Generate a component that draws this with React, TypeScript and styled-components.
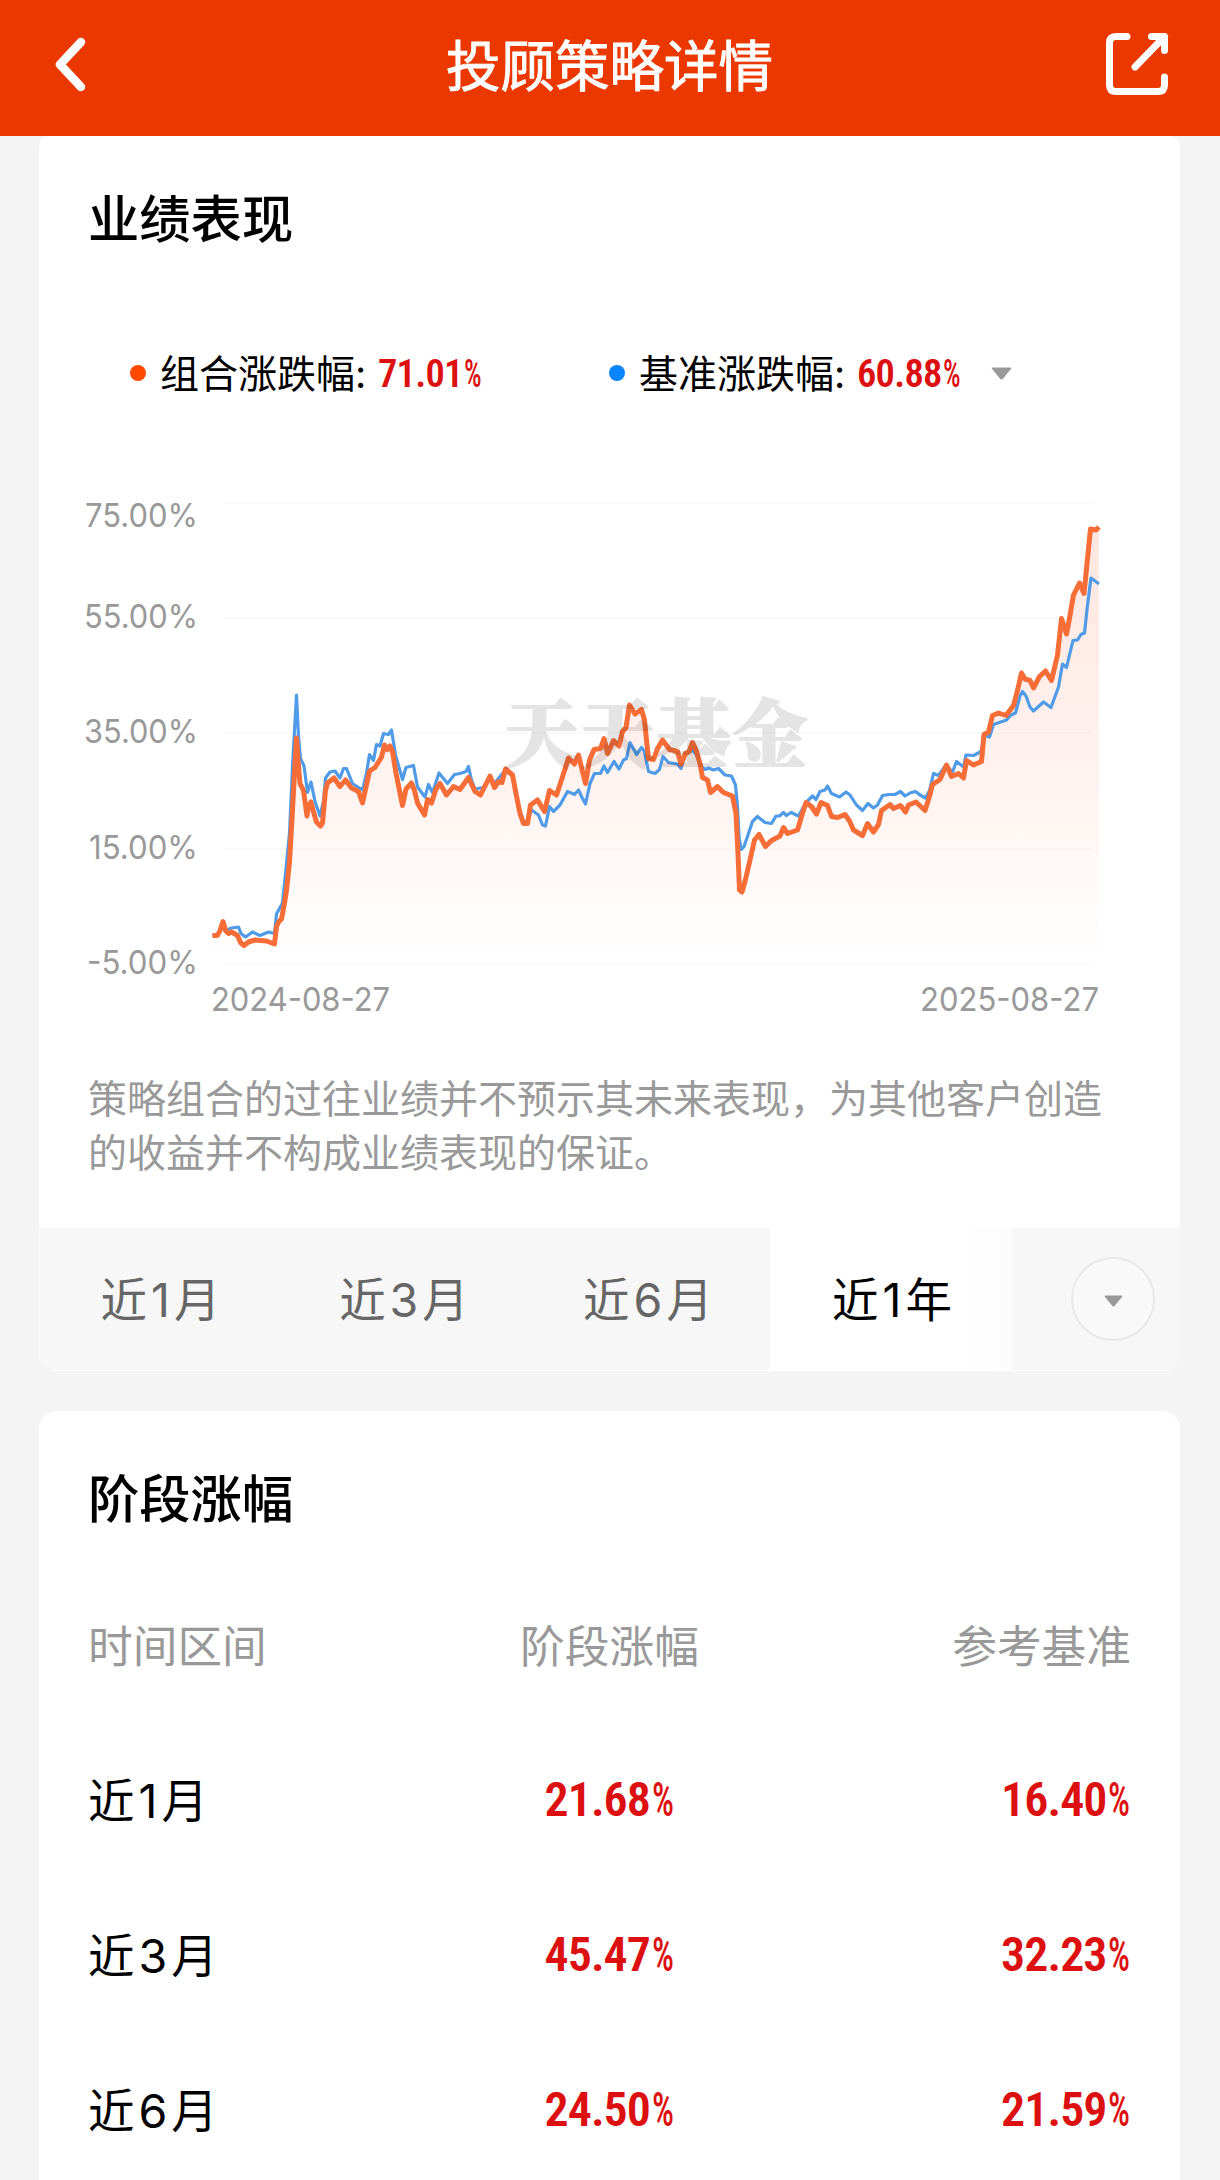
import React from 'react';
import styled, { createGlobalStyle } from 'styled-components';

const GlobalStyle = createGlobalStyle`
  * { box-sizing: border-box; }
  body {
    margin: 0;
    background: #f4f4f4;
    color: #000;
    font-family: Inter, "Noto Sans CJK SC", sans-serif;
  }
`;

const Page = styled.div`
  width: 1220px;
  height: 2180px;
  overflow: hidden;
  background: #f4f4f4;
`;

const Header = styled.header`
  display: flex;
  align-items: center;
  justify-content: space-between;
  height: 136px;
  padding: 0 51px 7px 55px;
  background: #ea3800;
`;

const PageTitle = styled.h1`
  margin: 2px 0 0 27px;
  font-size: 54.5px;
  font-weight: 400;
  line-height: 80px;
  color: #fff;
  -webkit-text-stroke: 0.9px #fff;
`;

const Main = styled.main`
  display: flex;
  flex-direction: column;
  gap: 40px;
  padding: 0 40px 0 39px;
`;

const Card = styled.section<{ $flushTop?: boolean; $height?: number }>`
  height: ${(p) => (p.$height ? `${p.$height}px` : 'auto')};
  border-radius: ${(p) => (p.$flushTop ? '10px 10px 16px 16px' : '18px')};
  background: #fff;
  overflow: hidden;
`;

const CardTitle = styled.h2<{ $height: number }>`
  margin: 0;
  padding-left: 49px;
  height: ${(p) => p.$height}px;
  line-height: ${(p) => p.$height}px;
  font-size: 51.3px;
  font-weight: 500;
`;

const Legend = styled.div`
  display: flex;
  align-items: center;
  height: 142px;
  padding-left: 91px;
`;

const LegendItem = styled.div<{ $width: number }>`
  display: flex;
  align-items: center;
  width: ${(p) => p.$width}px;
  font-size: 39px;
  white-space: nowrap;
`;

const Dot = styled.span<{ $color: string }>`
  flex: none;
  width: 16px;
  height: 16px;
  margin-right: 14px;
  border-radius: 50%;
  background: ${(p) => p.$color};
`;

const LegendLabel = styled.span`
  width: 218px;
  padding-bottom: 4px;
  font-weight: 400;
`;

const Rate = styled.span<{ $size: number }>`
  display: inline-flex;
  font-family: "Roboto Condensed", Roboto, sans-serif;
  font-stretch: 75%;
  font-size: ${(p) => p.$size}px;
  font-weight: 600;
  letter-spacing: -0.02em;
  color: #dc1010;
`;

const Percent = styled.span`
  width: 0.47em;
  margin-left: 0.04em;
  font-weight: 500;
  letter-spacing: 0;
  transform: scaleX(0.72);
  transform-origin: left center;
`;

const Chart = styled.svg`
  display: block;
  width: 1141px;
  height: 596px;
`;

const Disclaimer = styled.p`
  margin: 0;
  padding: 32px 40px 0 49px;
  height: 188px;
  font-size: 39px;
  font-weight: 400;
  line-height: 54px;
  color: #999;
  white-space: nowrap;
`;

const Tabs = styled.div`
  display: flex;
  height: 143px;
  background: #f7f7f7;
  border-bottom: 1px solid #fff;
`;

const Tab = styled.div<{ $width: number; $active?: boolean }>`
  display: flex;
  align-items: center;
  justify-content: center;
  width: ${(p) => p.$width}px;
  padding: 0 0 5px 4px;
  font-size: 46.5px;
  font-weight: 400;
  letter-spacing: 4px;
  color: ${(p) => (p.$active ? '#000' : '#666')};
  background: ${(p) =>
    p.$active ? 'linear-gradient(90deg, #fff 78%, #fcfcfc 98%, #f7f7f7 100%)' : 'transparent'};
`;

const More = styled.div`
  display: flex;
  flex: 1;
  align-items: center;
  justify-content: flex-end;
  padding-right: 25px;
`;

const MoreButton = styled.button`
  display: flex;
  align-items: center;
  justify-content: center;
  width: 84px;
  height: 84px;
  padding: 3px 0 0;
  border: 2px solid #e8e8e8;
  border-radius: 50%;
  background: #f9f9f9;
`;

const TableRow = styled.div<{ $height: number }>`
  display: grid;
  grid-template-columns: 1fr 1fr 1fr;
  align-items: center;
  height: ${(p) => p.$height}px;
  padding: 0 49px;
`;

const TableHead = styled(TableRow)`
  margin-bottom: 17px;
  padding-bottom: 5px;
  font-size: 44.7px;
  color: #999;
`;

const Cell = styled.div<{ $align?: string }>`
  display: flex;
  justify-content: ${(p) => p.$align || 'flex-start'};
`;

const PeriodCell = styled(Cell)`
  padding-bottom: 5px;
  font-size: 46.5px;
  letter-spacing: 4px;
`;

const productLine =
  '212.5,935.5 217.5,935.5 220,930.5 223,921.5 225.5,930.5 228.5,933.5 231.5,932 237.5,935.5 240.5,942.5 244,945.5 248.5,942 255,940 266.5,941 274.5,944 276.5,926.5 279,921.5 281.5,919 284.5,903 286.5,890.5 289.5,862 292,819 294.5,773 296.5,738 298.5,766 300,783.5 303.5,790.5 307,816 308.5,806 311,802 313.5,812 316.5,822 320.5,826 322.5,823 325.5,790.5 327.5,783 334,778 340,786.5 345.5,780 351.5,788 358.5,791.5 362.5,803 366,787 369.5,771 375,767.5 378.5,762 381.5,757 384.5,745 387.5,749.5 390,746 392.5,751.5 396,773 399.5,790.5 402.5,805.5 406,789 411.5,783 414.5,790.5 417.5,803 424.5,815 427.5,799.5 431.5,803 436,789 440,783.5 446.5,795 453.5,786.5 460,789.5 468.5,777.5 475,791.5 480.5,795 490,776 494.5,787.5 498.5,781.5 502,782.5 505.5,769 512.5,775 516,793.5 520,813.5 523.5,823.5 527.5,823.5 530.5,805 537.5,800 544.5,811.5 549.5,790.5 556.5,795 561.5,780 568.5,758 574.5,764 578.5,755 582.5,771.5 585.5,783.5 589.5,760 594,749.5 600.5,748.5 604,738.5 607.5,753.5 613.5,740.5 619,746 622.5,731.5 626,727.5 629.5,705 635,714 641.5,709.5 644.5,720 646.5,740 648.5,758.5 653.5,759.5 657.5,748.5 662.5,740 669.5,749.5 677.5,751.5 681,764 685.5,753.5 689,751.5 692.5,742.5 696,750 700,763.5 702.5,777.5 707.5,780 710.5,792.5 717.5,786.5 723.5,792.5 732.5,796 736,813.5 738,853.5 739.5,890 742,892 745,881.5 750,860 754.5,840 759,834.5 765.5,846.5 771.5,840.5 780,836 783.5,827.5 787.5,833.5 797.5,830 801.5,816.5 806,802.5 811.5,806.5 816.5,814 821,802.5 827.5,805.5 831.5,816.5 837.5,817.5 845,814.5 849.5,821 853.5,830 862.5,835.5 867.5,823.5 873.5,832 878.5,824.5 881.5,810.5 890,804.5 893.5,808.5 900.5,805.5 905.5,812 908.5,805 916,802 925,810.5 929,798 932.5,784.5 940,779.5 946.5,765 951.5,776.5 958.5,773.5 963.5,778 966.5,760.5 973.5,765 981.5,761.5 984,734.5 988.5,732 992.5,715.5 998.5,713 1006,715.5 1013.5,705.5 1017.5,690.5 1021.5,673 1025,679 1030,680.5 1033.5,688 1039.5,676.5 1045.5,671 1051.5,680.5 1057.5,655 1061.5,618.5 1066.5,634 1070,615.5 1073.5,595 1079.5,583 1084,593.5 1087.5,558.5 1090.5,529 1096,530 1099,527';

const benchmarkLine =
  '212.5,935.5 218,934 223,924 226.5,930 231.5,928 238.5,927 241,933.5 245.5,937 252.5,932 260,935.5 268.5,932 274.5,933.5 276.5,914 282.5,903 286,869 289.5,833.5 292.5,766 296.5,695 298.5,737 300.5,758.5 304,766 307.5,792.5 311,782 315,801.5 320,816 323.5,801.5 325.5,778 330,772 335,771 340,778 343.5,768.5 346.5,768.5 352.5,783.5 362.5,790 366.5,773 369.5,754.5 373.5,760.5 376.5,744.5 380,746 383.5,733.5 388.5,734.5 391.5,730 395.5,755 402.5,779.5 406,767.5 413.5,765.5 417.5,787 425,797 428.5,784.5 432.5,792.5 439,773 447.5,783.5 454.5,774.5 460,773.5 466,771.5 468.5,766.5 471.5,780 475,789 483.5,787.5 490,777.5 494.5,783.5 500,776.5 505.5,770 512.5,776 518,804 523.5,821.5 527.5,821.5 531.5,810 538.5,815 542.5,825 545.5,826 549.5,806.5 553.5,811.5 560,805 567.5,791.5 574.5,794.5 578.5,790 582.5,798.5 585.5,804 590,783.5 594.5,773.5 600.5,773.5 604,766 607.5,772.5 614,761.5 619,769 623.5,760 626.5,758.5 630,742.5 636.5,754.5 641.5,747.5 644.5,751.5 648.5,771.5 655,773.5 659.5,769.5 663,756.5 668.5,762.5 677.5,764 681,768.5 685,755 692.5,750 696.5,755 701.5,766.5 705,769.5 708.5,768 713.5,770 718.5,768.5 725,775 731.5,776 735.5,785 737.5,806.5 739,836.5 741,849.5 744,846.5 747.5,836.5 752.5,821.5 757.5,816.5 765,822.5 771.5,823.5 776,816 779.5,816 783.5,812.5 786.5,815.5 791,812.5 798.5,816 806,802.5 812.5,796 816,799.5 820,791.5 825,790 827.5,786 831.5,793.5 839.5,797 846,792 850,795 856.5,805 862.5,810.5 868,803.5 873.5,808 877.5,805 882.5,795.5 889,794.5 895,794.5 900.5,791.5 905,796 910,793 915.5,791.5 920,795 925.5,798 929.5,790.5 933.5,773.5 938.5,775.5 946,765 952.5,772 956.5,761.5 963.5,767 966,755 973.5,755.5 981,751.5 984.5,735.5 989.5,737 993.5,724.5 1006.5,720 1011,715 1015.5,713 1020,696 1022.5,691.5 1026,696 1030,707 1033.5,711 1043.5,702 1051,707.5 1058.5,687 1062.5,664 1066.5,667.5 1073,640.5 1077.5,640 1081,634.5 1084.5,633 1087.5,605 1091,578 1099,584';

const axisLabels = [
  { text: '75.00%', x: 85, width: 113, y: 527 },
  { text: '55.00%', x: 84, width: 114, y: 628 },
  { text: '35.00%', x: 84, width: 114, y: 743 },
  { text: '15.00%', x: 89, width: 109, y: 859 },
  { text: '-5.00%', x: 87, width: 111, y: 974 },
];

const dateLabels = [
  { text: '2024-08-27', x: 211, width: 179 },
  { text: '2025-08-27', x: 920, width: 179 },
];

const gridLines = [503, 618, 733, 849, 964];

const periods = [
  { label: '近1月', product: '21.68', benchmark: '16.40' },
  { label: '近3月', product: '45.47', benchmark: '32.23' },
  { label: '近6月', product: '24.50', benchmark: '21.59' },
];

function RateText({ value, size }: { value: string; size: number }) {
  return (
    <Rate $size={size}>
      {value}
      <Percent>%</Percent>
    </Rate>
  );
}

function Caret({ width, height }: { width: number; height: number }) {
  return (
    <svg width={width} height={height} viewBox="0 0 20 12">
      <path d="M1.5 1h17L11 10.4q-1 1-2 0Z" fill="#999" stroke="#999" strokeWidth="1.5" strokeLinejoin="round" />
    </svg>
  );
}

function PerformanceChart() {
  return (
    <Chart viewBox="39 444 1141 596">
      <defs>
        <linearGradient id="area" gradientUnits="userSpaceOnUse" x1="0" y1="528" x2="0" y2="964">
          <stop offset="0" stopColor="#ff5a32" stopOpacity="0.15" />
          <stop offset="0.6" stopColor="#ff5a32" stopOpacity="0.07" />
          <stop offset="1" stopColor="#ff8a50" stopOpacity="0" />
        </linearGradient>
      </defs>
      {gridLines.map((y) => (
        <line key={y} x1="223" x2="1093" y1={y} y2={y} stroke="#fafafa" strokeWidth="2" />
      ))}
      <polygon points={`${productLine} 1099,964 212.5,964`} fill="url(#area)" />
      <polyline points={benchmarkLine} fill="none" stroke="#4f9be8" strokeWidth="3.2" strokeLinejoin="round" />
      <polyline points={productLine} fill="none" stroke="#f76d38" strokeWidth="5" strokeLinejoin="round" />
      <text
        x="504"
        y="761"
        textLength="303"
        fontFamily='"Noto Serif CJK SC", serif'
        fontSize="74"
        fontWeight="900"
        fill="#000"
        stroke="#000"
        strokeWidth="2"
        opacity="0.1"
      >
        天天基金
      </text>
      {axisLabels.map((l) => (
        <text key={l.text} x={l.x} y={l.y} textLength={l.width} lengthAdjust="spacingAndGlyphs" fontSize="33" fill="#999">
          {l.text}
        </text>
      ))}
      {dateLabels.map((l) => (
        <text key={l.text} x={l.x} y="1011" textLength={l.width} lengthAdjust="spacingAndGlyphs" fontSize="33" fill="#999">
          {l.text}
        </text>
      ))}
    </Chart>
  );
}

export default function App() {
  return (
    <Page>
      <GlobalStyle />
      <Header>
        <svg width="32" height="56" viewBox="0 0 32 56" fill="none">
          <path d="M26 5 5 27.500 26 50" stroke="#fff" strokeWidth="8.500" strokeLinecap="round" strokeLinejoin="round" />
        </svg>
        <PageTitle>投顾策略详情</PageTitle>
        <svg width="64" height="64" viewBox="0 0 64 64" fill="none" stroke="#fff" strokeWidth="7" strokeLinecap="round" strokeLinejoin="round">
          <path d="M22 3.500H11Q4.500 3.500 4.500 10V52Q4.500 58.500 11 58.500H53Q59.500 58.500 59.500 52V44" />
          <path d="M46.500 3.500H59.500V17.500M59.500 3.500 30 34" />
        </svg>
      </Header>
      <Main>
        <Card $flushTop>
          <CardTitle $height={166}>业绩表现</CardTitle>
          <Legend>
            <LegendItem $width={479}>
              <Dot $color="#ff4a00" />
              <LegendLabel>组合涨跌幅:</LegendLabel>
              <RateText value="71.01" size={38.5} />
            </LegendItem>
            <LegendItem $width={382}>
              <Dot $color="#0a84ff" />
              <LegendLabel>基准涨跌幅:</LegendLabel>
              <RateText value="60.88" size={38.5} />
            </LegendItem>
            <Caret width={21} height={13} />
          </Legend>
          <PerformanceChart />
          <Disclaimer>
            策略组合的过往业绩并不预示其未来表现，为其他客户创造
            <br />
            的收益并不构成业绩表现的保证。
          </Disclaimer>
          <Tabs>
            <Tab $width={243}>近1月</Tab>
            <Tab $width={244}>近3月</Tab>
            <Tab $width={244}>近6月</Tab>
            <Tab $width={244} $active>
              近1年
            </Tab>
            <More>
              <MoreButton>
                <Caret width={19} height={12} />
              </MoreButton>
            </More>
          </Tabs>
        </Card>
        <Card $height={900}>
          <CardTitle $height={176}>阶段涨幅</CardTitle>
          <TableHead $height={118}>
            <Cell>时间区间</Cell>
            <Cell $align="center">阶段涨幅</Cell>
            <Cell $align="flex-end">参考基准</Cell>
          </TableHead>
          {periods.map((p) => (
            <TableRow key={p.label} $height={155}>
              <PeriodCell>{p.label}</PeriodCell>
              <Cell $align="center">
                <RateText value={p.product} size={48} />
              </Cell>
              <Cell $align="flex-end">
                <RateText value={p.benchmark} size={48} />
              </Cell>
            </TableRow>
          ))}
        </Card>
      </Main>
    </Page>
  );
}
